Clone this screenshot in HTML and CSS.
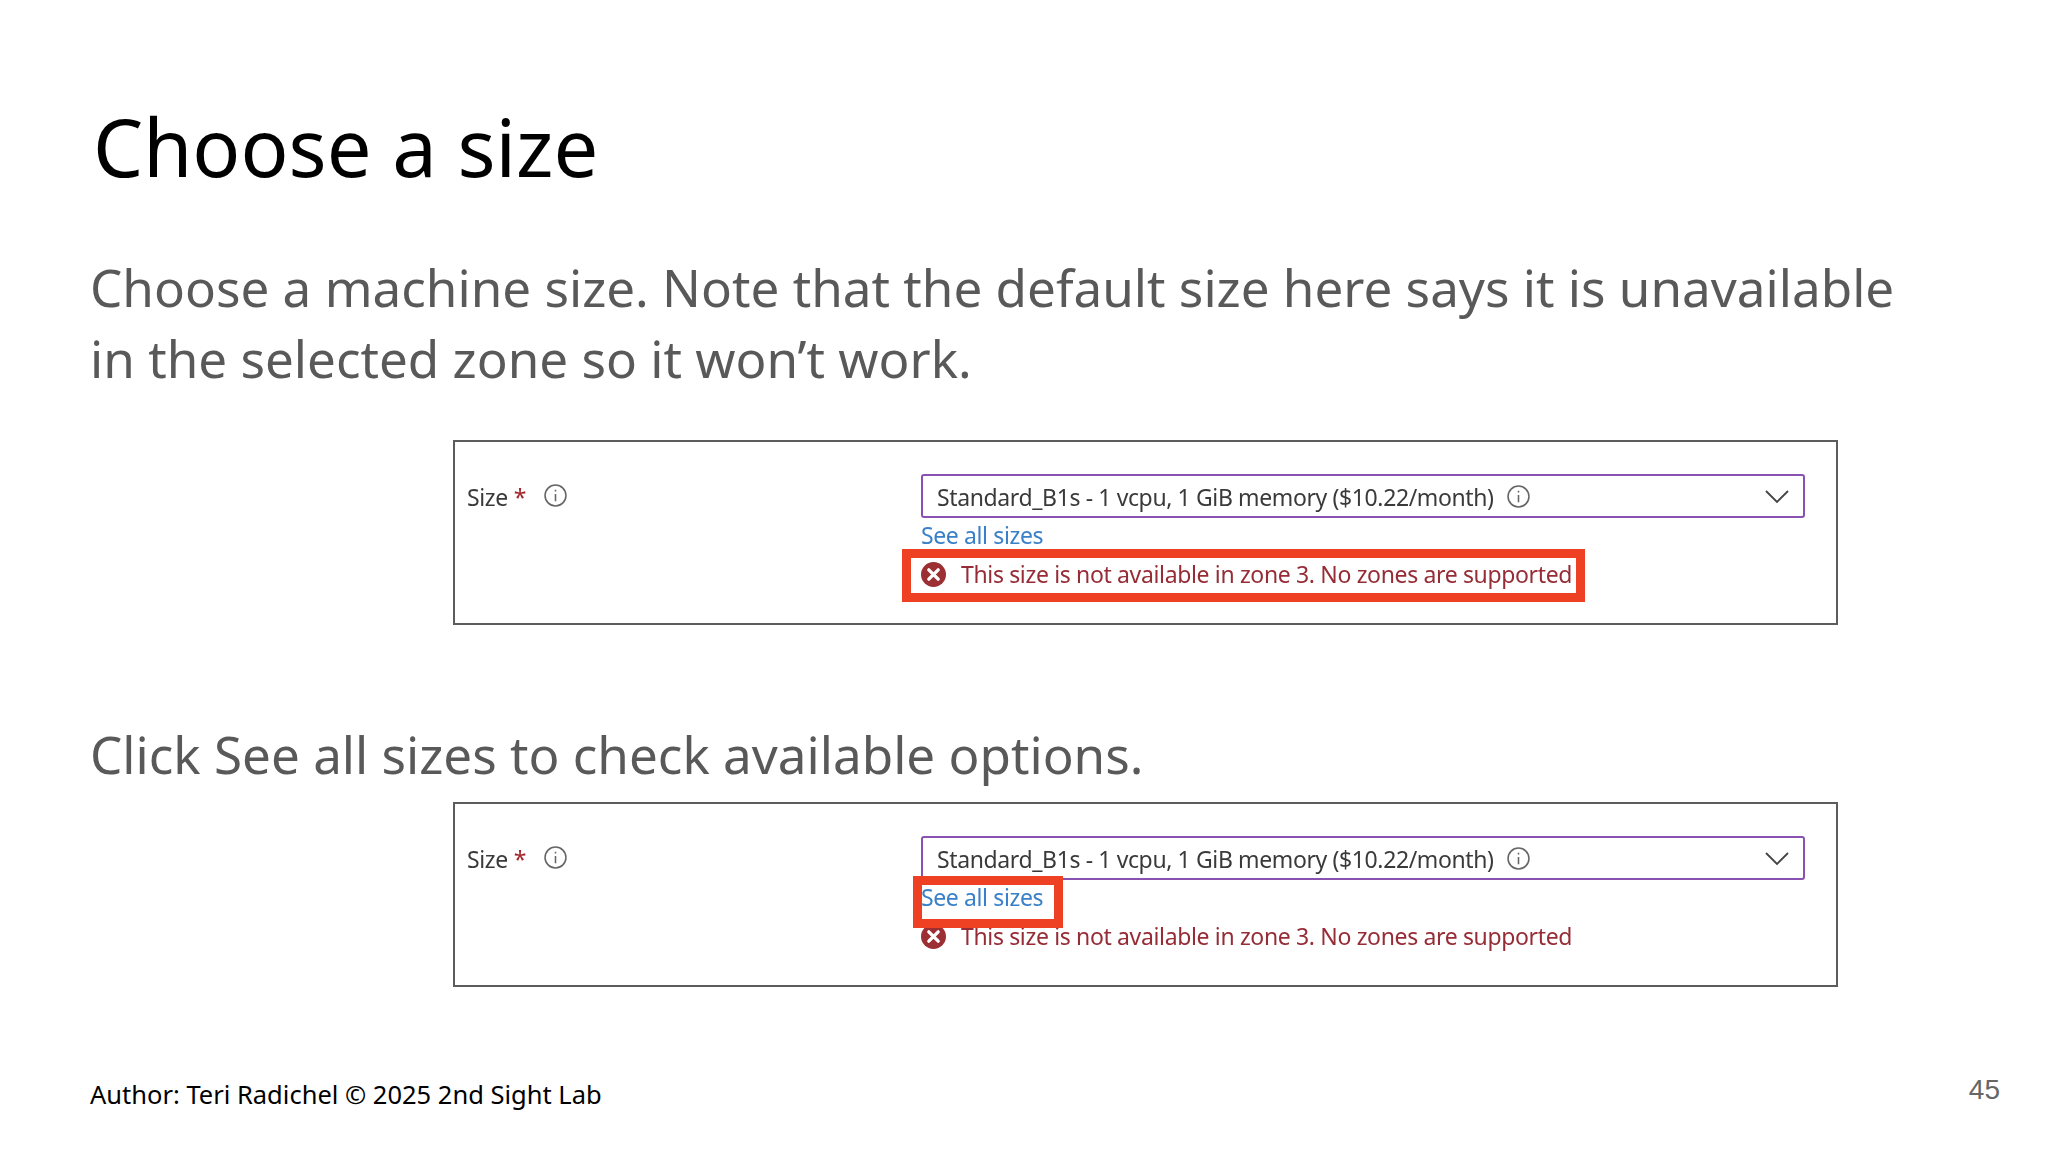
FILE: index.html
```html
<!DOCTYPE html>
<html lang="en">
<head>
<meta charset="utf-8">
<title>Choose a size</title>
<link rel="stylesheet" href="styles.css">
</head>
<body>
<main class="slide">
  <h1 class="title">Choose a size</h1>
  <p class="lead">Choose a machine size. Note that the default size here says it is unavailable in the selected zone so it won’t work.</p>
  <section class="shot shot-first">
    <div class="label">
      <span>Size</span><span class="req">*</span>
      <svg class="info info-label" viewBox="0 0 22 22"><circle cx="11" cy="11" r="10" /><path d="M11 9.5v7M11 5.5v1.6" /></svg>
    </div>
    <div class="field">
      <div class="select">
        <span class="value">Standard_B1s - 1 vcpu, 1 GiB memory ($10.22/month)</span>
        <svg class="info info-select" viewBox="0 0 22 22"><circle cx="11" cy="11" r="10" /><path d="M11 9.5v7M11 5.5v1.6" /></svg>
        <svg class="chevron" viewBox="0 0 24 14"><path d="M1 1l11 11L23 1" /></svg>
      </div>
      <a class="link">See all sizes</a>
      <div class="error">
        <svg class="error-icon" viewBox="0 0 24 24"><circle cx="12" cy="12" r="12" /><path d="M7.5 7.5l9 9M16.5 7.5l-9 9" /></svg>
        <span>This size is not available in zone 3. No zones are supported</span>
      </div>
      <div class="mark mark-error"></div>
    </div>
  </section>
  <p class="lead lead-second">Click See all sizes to check available options.</p>
  <section class="shot">
    <div class="label">
      <span>Size</span><span class="req">*</span>
      <svg class="info info-label" viewBox="0 0 22 22"><circle cx="11" cy="11" r="10" /><path d="M11 9.5v7M11 5.5v1.6" /></svg>
    </div>
    <div class="field">
      <div class="select">
        <span class="value">Standard_B1s - 1 vcpu, 1 GiB memory ($10.22/month)</span>
        <svg class="info info-select" viewBox="0 0 22 22"><circle cx="11" cy="11" r="10" /><path d="M11 9.5v7M11 5.5v1.6" /></svg>
        <svg class="chevron" viewBox="0 0 24 14"><path d="M1 1l11 11L23 1" /></svg>
      </div>
      <a class="link">See all sizes</a>
      <div class="error">
        <svg class="error-icon" viewBox="0 0 24 24"><circle cx="12" cy="12" r="12" /><path d="M7.5 7.5l9 9M16.5 7.5l-9 9" /></svg>
        <span>This size is not available in zone 3. No zones are supported</span>
      </div>
      <div class="mark mark-link"></div>
    </div>
  </section>
  <footer class="footer">
    <span class="author">Author: Teri Radichel © 2025 2nd Sight Lab</span>
    <span class="page">45</span>
  </footer>
</main>
</body>
</html>
```
FILE: styles.css
```css
* { box-sizing: border-box; }
html, body { margin: 0; padding: 0; background: #fff; }
body { font-family: "Noto Sans", "Open Sans", sans-serif; }
.slide {
  width: 2048px;
  height: 1152px;
  padding: 96px 22px 0 90px;
  display: flex;
  flex-direction: column;
  overflow: hidden;
}
.title {
  margin: 0 0 0 3px;
  font-size: 79.5px;
  line-height: 100px;
  font-weight: 400;
  color: #000;
}
.lead {
  margin: 56px 0 0;
  width: 1850px;
  font-size: 51.2px;
  line-height: 71px;
  color: #595959;
}
.lead-second { margin-top: 94px; }
.shot {
  margin: 12px 0 0 363px;
  width: 1385px;
  height: 185px;
  border: 2px solid #5c5c5c;
  display: grid;
  grid-template-columns: 453px 885px;
  padding: 32px 0 0 12px;
  font-size: 23px;
  letter-spacing: -0.38px;
  color: #3a3a3a;
  filter: blur(0.5px);
}
.shot-first { margin-top: 46px; }
.label {
  display: flex;
  align-items: flex-start;
  line-height: 34px;
  height: 40px;
  padding-top: 6px;
}
.req { color: #a4262c; margin-left: 6px; }
.info {
  width: 23px;
  height: 23px;
  fill: none;
  stroke: #666;
  stroke-width: 1.5;
  flex: none;
}
.info-label { margin: 4px 0 0 18px; }
.info-select { margin-top: 1px; }
.field { position: relative; margin-left: 1px; }
.select {
  height: 44px;
  border: 2px solid #8a52b0;
  border-radius: 3px;
  display: flex;
  align-items: center;
  padding: 0 14px 0 14px;
}
.value { margin: 2px 13px 0 0; white-space: nowrap; }
.chevron {
  width: 24px;
  height: 14px;
  margin: 1px 0 0 auto;
  fill: none;
  stroke: #444;
  stroke-width: 1.8;
}
.link {
  display: block;
  color: #3a80c9;
  line-height: 34px;
  margin-top: 0;
}
.error {
  display: flex;
  align-items: center;
  height: 38px;
  margin-top: 3px;
  color: #962c36;
  letter-spacing: -0.35px;
  white-space: nowrap;
}
.error-icon { width: 25px; height: 25px; margin-right: 15px; flex: none; }
.error-icon circle { fill: #9c2f33; }
.error-icon path { stroke: #fff; stroke-width: 3.2; fill: none; stroke-linecap: round; }
.mark { position: absolute; border-style: solid; border-color: #ee4023; border-width: 9px; }
.mark-error { left: -19px; top: 75px; width: 683px; height: 53px; }
.mark-link { left: -8px; top: 40px; width: 150px; height: 52px; }
.footer {
  margin-top: 90px;
  display: flex;
  justify-content: space-between;
  align-items: flex-start;
  padding-right: 26px;
}
.author { font-size: 25.5px; color: #000; }
.page { font-family: "Liberation Sans", Arial, sans-serif; font-size: 28px; color: #666; margin-top: -3px; }
```
